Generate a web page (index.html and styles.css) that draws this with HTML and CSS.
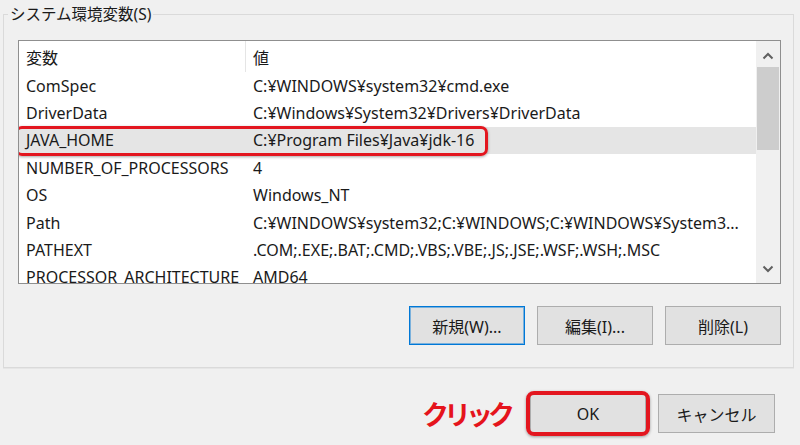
FILE: index.html
```html
<!DOCTYPE html>
<html lang="ja">
<head>
<meta charset="utf-8">
<title>システム環境変数</title>
<link rel="stylesheet" href="styles.css">
</head>
<body>
<fieldset class="group">
  <legend class="group-title">システム環境変数(S)</legend>
  <div class="inner">
    <div class="list">
      <div class="list-main">
        <div class="row header">
          <div class="cell name">変数</div>
          <div class="cell value">値</div>
        </div>
        <div class="row"><div class="cell name">ComSpec</div><div class="cell value">C:¥WINDOWS¥system32¥cmd.exe</div></div>
        <div class="row"><div class="cell name">DriverData</div><div class="cell value">C:¥Windows¥System32¥Drivers¥DriverData</div></div>
        <div class="row selected"><div class="cell name">JAVA_HOME</div><div class="cell value">C:¥Program Files¥Java¥jdk-16</div><span class="mark mark-row"></span></div>
        <div class="row"><div class="cell name">NUMBER_OF_PROCESSORS</div><div class="cell value">4</div></div>
        <div class="row"><div class="cell name">OS</div><div class="cell value">Windows_NT</div></div>
        <div class="row"><div class="cell name">Path</div><div class="cell value">C:¥WINDOWS¥system32;C:¥WINDOWS;C:¥WINDOWS¥System3...</div></div>
        <div class="row"><div class="cell name">PATHEXT</div><div class="cell value">.COM;.EXE;.BAT;.CMD;.VBS;.VBE;.JS;.JSE;.WSF;.WSH;.MSC</div></div>
        <div class="row"><div class="cell name">PROCESSOR_ARCHITECTURE</div><div class="cell value">AMD64</div></div>
      </div>
      <div class="scrollbar">
        <div class="sb-btn">
          <svg width="12" height="8" viewBox="0 0 12 8"><polyline points="1.5,6.5 6,2 10.5,6.5" fill="none" stroke="#606060" stroke-width="2"/></svg>
        </div>
        <div class="sb-track"><div class="sb-thumb"></div></div>
        <div class="sb-btn down">
          <svg width="12" height="8" viewBox="0 0 12 8"><polyline points="1.5,1.5 6,6 10.5,1.5" fill="none" stroke="#606060" stroke-width="2"/></svg>
        </div>
      </div>
    </div>
    <div class="actions">
      <button class="btn focused">新規(W)...</button>
      <button class="btn">編集(I)...</button>
      <button class="btn">削除(L)</button>
    </div>
  </div>
</fieldset>
<div class="footer">
  <span class="callout">クリック</span>
  <button class="btn ok">OK<span class="mark mark-btn"></span></button>
  <button class="btn cancel">キャンセル</button>
</div>
</body>
</html>
```

FILE: styles.css
```css
* { box-sizing: border-box; }

html, body {
  margin: 0;
  padding: 0;
}

body {
  width: 800px;
  height: 445px;
  overflow: hidden;
  background: #f0f0f0;
  font-family: "Segoe UI", "Noto Sans", "Noto Sans CJK JP", sans-serif;
  font-size: 16px;
  color: #1a1a1a;
}

.group {
  margin: 4px 6px 0 3px;
  padding: 0;
  border: 1px solid #dadada;
  box-shadow: 0 1px 0 #e6e6e6;
  min-width: 0;
}

.group-title {
  margin-left: 4px;
  padding: 0 2px;
  line-height: 20px;
  font-size: 15.5px;
  color: #1a1a1a;
}

.inner {
  padding: 16px 12px 22px 14px;
}

.list {
  display: flex;
  height: 244px;
  border: 1px solid #8f8f8f;
  background: #fff;
}

.list-main {
  flex: 1;
  overflow: hidden;
}

.row {
  position: relative;
  display: flex;
  height: 27.4px;
  align-items: center;
  white-space: nowrap;
}

.row.header {
  height: 31px;
}

.row.selected {
  background: #e5e5e5;
}

.cell.name {
  width: 227px;
  flex: none;
  padding-left: 7px;
}

.header .cell.name {
  border-right: 1px solid #e5e5e5;
  align-self: stretch;
  display: flex;
  align-items: center;
}

.cell.value {
  padding-left: 7px;
}

.scrollbar {
  width: 24px;
  flex: none;
  display: flex;
  flex-direction: column;
  background: #f0f0f0;
  padding: 0 1px;
}

.sb-btn {
  height: 26px;
  display: flex;
  align-items: center;
  justify-content: center;
  padding-top: 4px;
}

.sb-btn.down {
  padding-top: 0;
  padding-bottom: 2px;
}

.sb-track {
  flex: 1;
}

.sb-thumb {
  height: 83px;
  background: #cdcdcd;
}

.actions {
  display: flex;
  justify-content: flex-end;
  gap: 12px;
  margin-top: 22px;
}

.btn {
  position: relative;
  width: 116px;
  height: 39px;
  background: #e1e1e1;
  border: 1px solid #adadad;
  font-family: inherit;
  font-size: 16px;
  color: #1a1a1a;
  padding: 0;
}

.btn.focused {
  border-color: #0078d7;
  box-shadow: inset 0 0 0 1px rgba(0, 120, 215, 0.45);
}

.footer {
  display: flex;
  justify-content: flex-end;
  align-items: center;
  gap: 12px;
  margin-top: 26px;
  padding-right: 25px;
}

.callout {
  margin-right: 8px;
  font-family: "Noto Sans CJK JP", sans-serif;
  font-weight: 700;
  font-size: 27px;
  letter-spacing: -5px;
  color: #e5141c;
  line-height: 32px;
}

.btn.cancel {
  width: 117px;
}

.mark {
  position: absolute;
  border: 3px solid #e3161f;
  border-radius: 7px;
  box-shadow: 0 1px 3px rgba(0, 0, 0, 0.35);
  pointer-events: none;
}

.mark-row {
  left: -4px;
  top: -1px;
  width: 473px;
  height: 30px;
}

.mark-btn {
  left: -5px;
  top: -4px;
  right: -5px;
  bottom: -4px;
  border-width: 4px;
  border-radius: 8px;
}
```
